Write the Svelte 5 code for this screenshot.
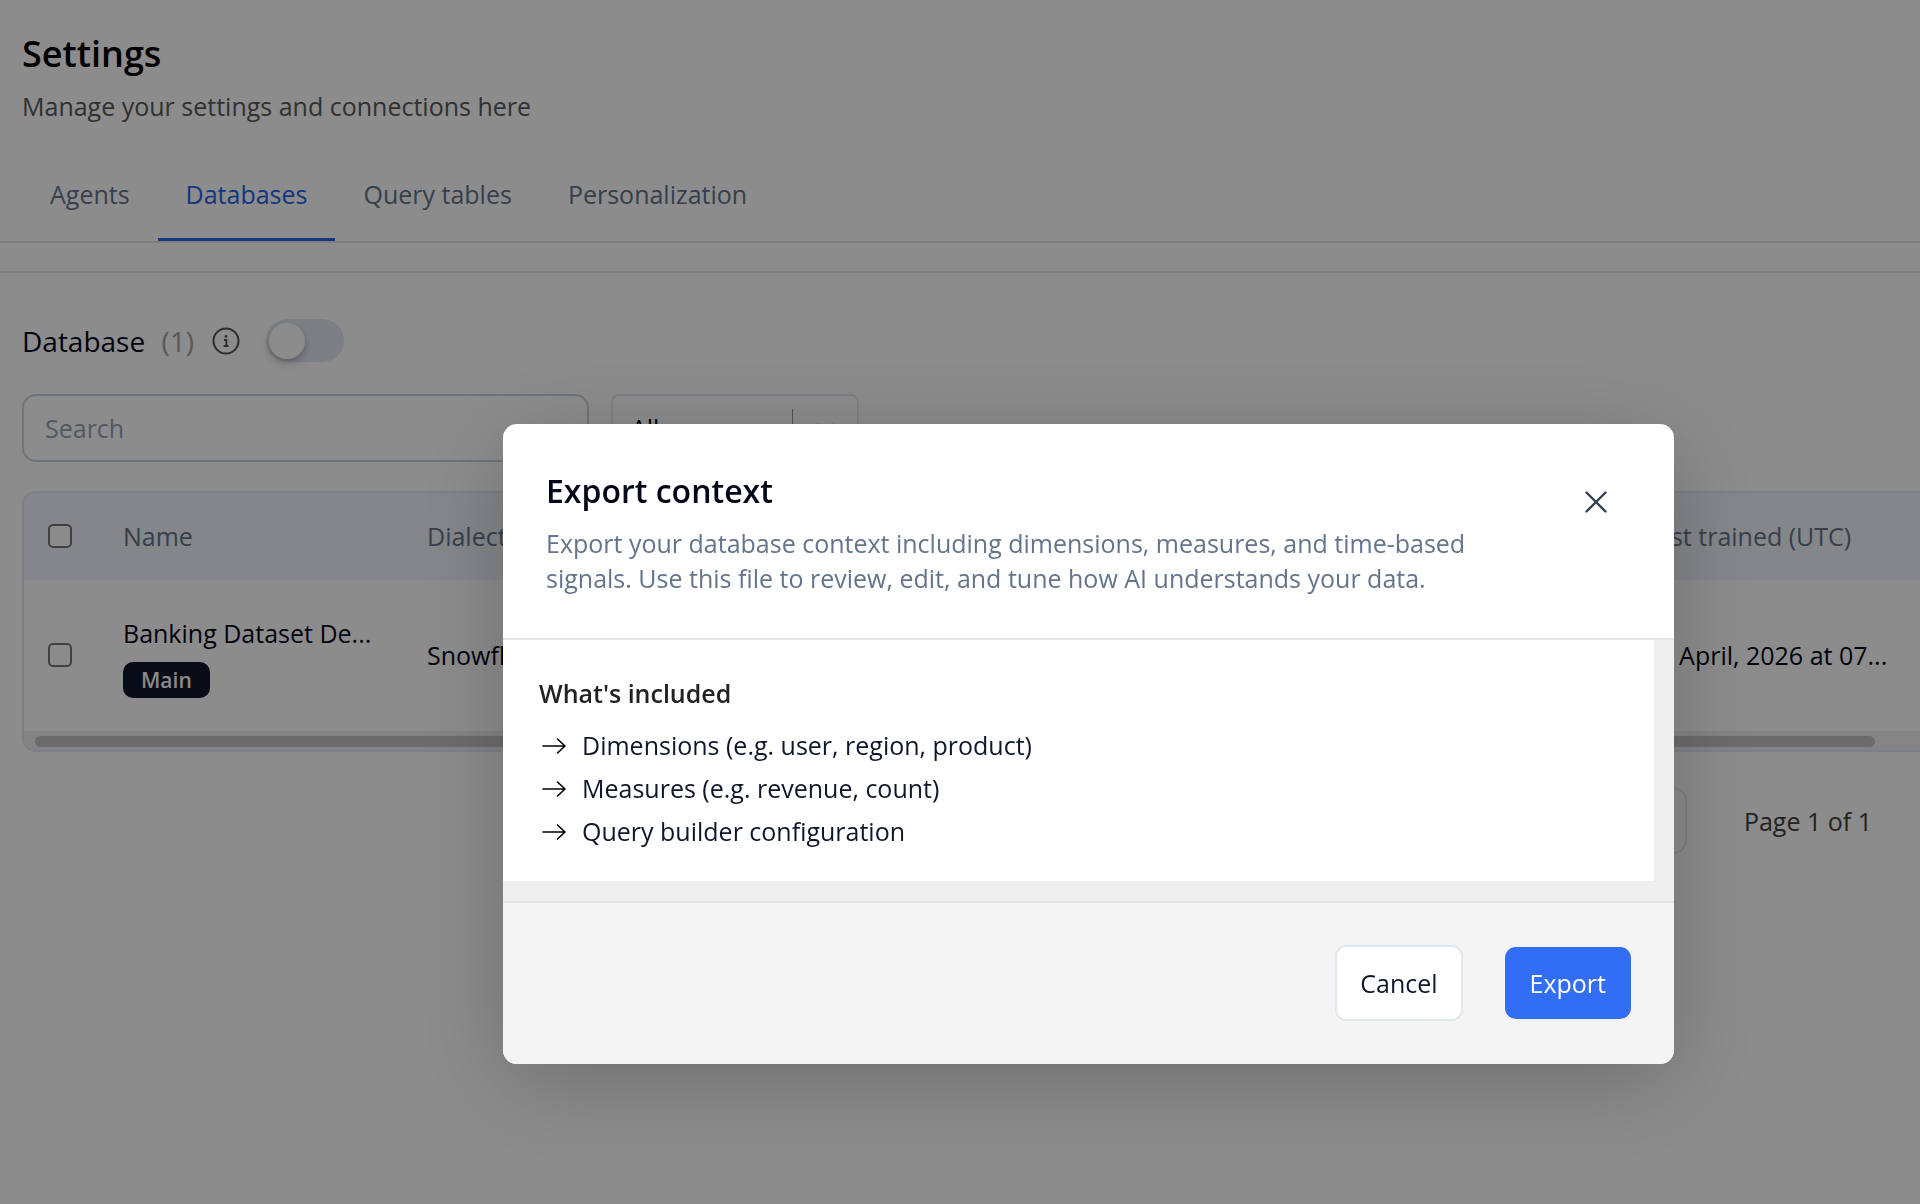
<script lang="ts">
  const tabs = ['Agents', 'Databases', 'Query tables', 'Personalization'];
  const included = [
    'Dimensions (e.g. user, region, product)',
    'Measures (e.g. revenue, count)',
    'Query builder configuration',
  ];

  let active = $state('Databases');
  let search = $state('');
  let open = $state(true);
</script>

<main class="page">
  <header>
    <h1>Settings</h1>
    <p>Manage your settings and connections here</p>
  </header>

  <nav class="tabs">
    {#each tabs as tab}
      <button class="tab" class:active={tab === active} onclick={() => (active = tab)}>{tab}</button>
    {/each}
  </nav>

  <section>
    <div class="heading">
      <h2>Database <span class="count">(1)</span></h2>
      <svg class="info" viewBox="0 0 28 28" fill="none" aria-hidden="true">
        <circle cx="14" cy="14" r="12.5" stroke="currentColor" stroke-width="2" />
        <path d="M12 13h2.4v6M11.6 19h5" stroke="currentColor" stroke-width="1.8" />
        <circle cx="14" cy="9.4" r="1.4" fill="currentColor" />
      </svg>
      <input class="toggle" type="checkbox" role="switch" aria-label="Show databases" />
    </div>

    <div class="filters">
      <input class="search" type="text" placeholder="Search" aria-label="Search" bind:value={search} />
      <div class="select">
        <select aria-label="Filter">
          <option>All</option>
        </select>
        <span class="sep"></span>
        <svg viewBox="0 0 20 20" aria-hidden="true">
          <path d="M2 6l8 8 8-8" fill="none" stroke="currentColor" stroke-width="2.4" stroke-linecap="round" />
        </svg>
      </div>
    </div>

    <div class="card">
      <table>
        <thead>
          <tr>
            <th class="check"><input type="checkbox" aria-label="Select all" /></th>
            <th class="name">Name</th>
            <th>Dialect</th>
            <th class="trained">Last trained (UTC)</th>
          </tr>
        </thead>
        <tbody>
          <tr>
            <td class="check"><input type="checkbox" aria-label="Select row" /></td>
            <td class="name">
              <div>Banking Dataset De...</div>
              <span class="badge">Main</span>
            </td>
            <td>Snowflake</td>
            <td class="trained">15 April, 2026 at 07...</td>
          </tr>
        </tbody>
      </table>
      <div class="track"><div class="thumb"></div></div>
    </div>

    <div class="pager">
      <button aria-label="Next page"></button>
      <span>Page 1 of 1</span>
    </div>
  </section>
</main>

{#if open}
  <div class="overlay">
    <div class="modal" role="dialog" aria-modal="true" aria-labelledby="export-title">
      <div class="modal-head">
        <div class="modal-text">
          <h3 id="export-title">Export context</h3>
          <p>Export your database context including dimensions, measures, and time-based signals. Use this file to review, edit, and tune how AI understands your data.</p>
        </div>
        <button class="close" aria-label="Close" onclick={() => (open = false)}>
          <svg viewBox="0 0 24 24" aria-hidden="true">
            <path d="M2.500 2.500l19 19M21.500 2.500l-19 19" stroke="currentColor" stroke-width="2.4" stroke-linecap="round" />
          </svg>
        </button>
      </div>

      <div class="modal-body">
        <div class="content">
          <h4>What's included</h4>
          <ul>
            {#each included as item}
              <li>
                <svg viewBox="0 0 28 28" fill="none" aria-hidden="true">
                  <path d="M4 14h22M18.500 7l7.500 7-7.500 7" stroke="currentColor" stroke-width="1.6" stroke-linecap="round" stroke-linejoin="round" />
                </svg>
                {item}
              </li>
            {/each}
          </ul>
        </div>
      </div>

      <div class="modal-foot">
        <button class="cancel" onclick={() => (open = false)}>Cancel</button>
        <button class="export">Export</button>
      </div>
    </div>
  </div>
{/if}

<style>
  :global(body) {
    background: #fff;
    overflow: hidden;
    font-family: 'Open Sans', 'Noto Sans', sans-serif;
    font-size: 25px;
    line-height: 36px;
    color: #020617;
  }
  h1, h2, h3, h4, p, ul { margin: 0; padding: 0; }
  button, input, select {
    font: inherit;
    color: inherit;
    margin: 0;
    box-sizing: border-box;
  }
  button { cursor: pointer; }

  header { padding: 30px 22px 0; }
  h1 {
    font-size: 36px;
    font-weight: 600;
    line-height: 48px;
    color: #000;
  }
  header p { margin-top: 10px; color: #595959; }

  .tabs {
    display: flex;
    margin-top: 28px;
    padding: 0 22px;
    border-bottom: 2px solid #e6e6e6;
  }
  .tab {
    padding: 24px 28px 26px;
    border: 0;
    border-bottom: 3px solid transparent;
    background: none;
    color: #64748b;
  }
  .tab.active { color: #2563eb; border-color: #2563eb; }

  section {
    margin-top: 28px;
    padding: 46px 0 0 22px;
    border-top: 2px solid #e6e6e6;
  }
  .heading { display: flex; align-items: center; height: 43px; }
  h2 { font-size: 28px; font-weight: 400; }
  .count { margin-left: 9px; color: #a3a3a3; }
  .info { width: 28px; height: 28px; margin: 0 26px 0 18px; color: #525252; }
  .toggle {
    appearance: none;
    width: 78px;
    height: 43px;
    padding: 4px 3px;
    border-radius: 22px;
    background: #e2e8f0;
  }
  .toggle::before {
    content: '';
    display: block;
    width: 36px;
    height: 36px;
    border-radius: 50%;
    background: #fff;
    box-shadow: 0 4px 8px rgba(0, 0, 0, 0.25);
  }
  .toggle:checked::before { margin-left: auto; }

  .filters { display: flex; gap: 22px; margin-top: 32px; }
  .search {
    width: 567px;
    height: 68px;
    padding: 0 21px;
    border: 2px solid #cbd5e1;
    border-radius: 14px;
    background: #fff;
  }
  .search::placeholder { color: #94a3b8; opacity: 1; }
  .select {
    display: flex;
    align-items: center;
    width: 248px;
    height: 68px;
    box-sizing: border-box;
    border: 2px solid #e2e8f0;
    border-radius: 8px;
  }
  .select select {
    flex: 1;
    appearance: none;
    padding: 0 18px;
    border: 0;
    background: none;
    color: #000;
  }
  .select .sep { width: 1px; height: 38px; background: #999; }
  .select svg { width: 20px; height: 20px; margin: 0 22px; color: #e5e5e5; }

  .card {
    margin-top: 29px;
    border: 2px solid #e2e8f0;
    border-right: 0;
    border-radius: 14px 0 0 14px;
    overflow: hidden;
  }
  table {
    width: 100%;
    table-layout: fixed;
    border-collapse: collapse;
    text-align: left;
    white-space: nowrap;
  }
  th, td { padding: 0 0 2px; }
  th {
    height: 85px;
    background: #f1f4f9;
    color: #64748b;
    font-weight: 500;
  }
  td { height: 149px; }
  .check { width: 99px; }
  .name { width: 304px; }
  td.name { padding: 2px 0 0; }
  .trained { width: 276px; }
  .check input {
    appearance: none;
    display: block;
    width: 24px;
    height: 24px;
    margin-left: 24px;
    border: 2px solid #767676;
    border-radius: 5px;
    background: #fff;
  }
  .badge {
    display: inline-block;
    margin-top: 11px;
    padding: 0 18px;
    border-radius: 10px;
    background: #0f172a;
    color: #f8fafc;
    font-size: 21px;
    font-weight: 600;
    vertical-align: top;
  }
  .track { padding: 5px 45px 3px 11px; background: #f0f0f0; }
  .thumb { height: 11px; border-radius: 6px; background: #c4c4c4; }

  .pager {
    display: flex;
    align-items: center;
    justify-content: flex-end;
    gap: 57px;
    margin-top: 35px;
    padding-right: 48px;
    color: #404040;
  }
  .pager button {
    width: 67px;
    height: 67px;
    border: 2px solid #e2e8f0;
    border-radius: 14px;
    background: #fff;
  }

  .overlay {
    position: fixed;
    inset: 0;
    padding: 424px 246px 0 503px;
    background: rgba(0, 0, 0, 0.45);
  }
  .modal {
    border-radius: 14px;
    background: #fff;
    overflow: hidden;
    box-shadow: 0 18px 90px rgba(0, 0, 0, 0.22);
  }
  .modal-head {
    display: flex;
    justify-content: space-between;
    padding: 45px 66px 42px 43px;
    border-bottom: 2px solid #e6e6e6;
  }
  .modal-text { max-width: 960px; }
  h3 { font-size: 32px; font-weight: 600; line-height: 44px; }
  .modal-head p { margin-top: 13px; line-height: 35px; color: #64748b; }
  .close {
    align-self: flex-start;
    display: flex;
    margin-top: 21px;
    padding: 0;
    border: 0;
    background: none;
    color: #334155;
  }
  .close svg { width: 24px; height: 24px; }

  .modal-body { padding: 0 20px 20px 0; background: #efefef; }
  .content { padding: 35px 36px 28px; background: #fff; }
  h4 { font-size: 25px; font-weight: 600; color: #222; }
  ul { margin-top: 13px; list-style: none; }
  li {
    display: flex;
    align-items: center;
    gap: 15px;
    line-height: 43px;
    color: #0f172a;
  }
  li svg { width: 28px; height: 28px; color: #000; }

  .modal-foot {
    display: flex;
    align-items: center;
    justify-content: flex-end;
    gap: 42px;
    padding: 42px 43px 43px;
    border-top: 2px solid #e2e4e8;
    background: #f4f4f4;
  }
  .modal-foot button { border-radius: 11px; }
  .cancel {
    padding: 18px 23px;
    border: 2px solid #e2e8f0;
    background: #fff;
    color: #0f172a;
  }
  .export {
    padding: 18px 25px;
    border: 0;
    background: #316ef4;
    color: #fff;
  }
</style>
